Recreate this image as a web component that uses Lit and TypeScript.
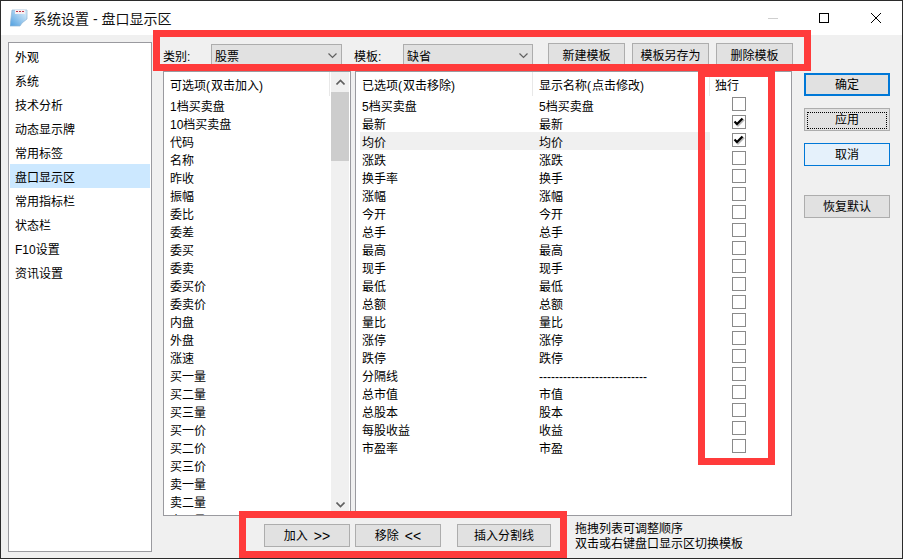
import { LitElement, css, html } from "lit";
import { customElement } from "lit/decorators.js";

const NAV = ["外观", "系统", "技术分析", "动态显示牌", "常用标签", "盘口显示区", "常用指标栏", "状态栏", "F10设置", "资讯设置"];

const AVAILABLE = [
  "1档买卖盘", "10档买卖盘", "代码", "名称", "昨收", "振幅", "委比", "委差", "委买", "委卖", "委买价", "委卖价",
  "内盘", "外盘", "涨速", "买一量", "买二量", "买三量", "买一价", "买二价", "买三价", "卖一量", "卖二量", "卖三量",
];

const SELECTED: [string, string, boolean][] = [
  ["5档买卖盘", "5档买卖盘", false],
  ["最新", "最新", true],
  ["均价", "均价", true],
  ["涨跌", "涨跌", false],
  ["换手率", "换手", false],
  ["涨幅", "涨幅", false],
  ["今开", "今开", false],
  ["总手", "总手", false],
  ["最高", "最高", false],
  ["现手", "现手", false],
  ["最低", "最低", false],
  ["总额", "总额", false],
  ["量比", "量比", false],
  ["涨停", "涨停", false],
  ["跌停", "跌停", false],
  ["分隔线", "---------------------------", false],
  ["总市值", "市值", false],
  ["总股本", "股本", false],
  ["每股收益", "收益", false],
  ["市盈率", "市盈", false],
];

const chevron = html`<svg class="chev" width="9" height="6" viewBox="0 0 9 6"><path d="M.5 .5 4.5 4.5 8.5 .5" fill="none" stroke="#606060" stroke-width="1.2"/></svg>`;

@customElement("app-root")
export class AppRoot extends LitElement {
  static styles = css`
    :host {
      display: block;
      position: relative;
      width: 903px;
      height: 559px;
      overflow: hidden;
      font: 12px/18px "Liberation Sans", "Noto Sans CJK SC", sans-serif;
      color: #000;
    }

    .window {
      box-sizing: border-box;
      width: 903px;
      height: 559px;
      display: flex;
      flex-direction: column;
      background: #f0f0f0;
      border: 1px solid #2b2b2b;
    }

    .titlebar {
      height: 34px;
      flex: none;
      display: flex;
      align-items: center;
      background: #fff;
      padding-left: 9px;
    }

    .title {
      font-size: 14px;
      margin-left: 5px;
      padding-top: 2px;
      color: #111;
    }

    .winbtns {
      margin-left: auto;
      display: flex;
      align-items: center;
      margin-right: 21px;
    }

    .winbtns svg {
      display: block;
      margin-left: 41px;
    }

    .winbtns svg:last-child {
      margin-left: 42px;
    }

    .body {
      flex: 1;
      display: flex;
      padding: 7px 0 6px 7px;
      min-height: 0;
    }

    .nav {
      box-sizing: border-box;
      width: 144px;
      flex: none;
      background: #fff;
      border: 1px solid #9a9a9f;
      padding: 1px;
    }

    .nav div {
      box-sizing: border-box;
      height: 24px;
      line-height: 24px;
      padding: 2px 0 0 5px;
    }

    .nav .on {
      background: #cce8ff;
    }

    .main {
      width: 629px;
      flex: none;
      margin-left: 11px;
      display: flex;
      flex-direction: column;
    }

    .toolbar {
      box-sizing: border-box;
      display: flex;
      align-items: flex-start;
      height: 29px;
      flex: none;
      padding-top: 1px;
    }

    .tlabel {
      width: 48px;
      flex: none;
      line-height: 24px;
      margin-top: 2px;
    }

    .tlabel.second {
      margin-left: 12px;
      width: 49px;
    }

    .combo {
      box-sizing: border-box;
      height: 23px;
      margin-top: 1px;
      background: #e1e1e1;
      border: 1px solid #adadad;
      display: flex;
      align-items: center;
      padding: 0 4px 0 3px;
      flex: none;
      justify-content: space-between;
    }

    .combo span {
      padding-top: 2px;
    }

    .btn {
      box-sizing: border-box;
      height: 23px;
      flex: none;
      background: #e1e1e1;
      border: 1px solid #adadad;
      display: flex;
      align-items: center;
      justify-content: center;
      padding-top: 1px;
    }

    .toolbar .btn {
      width: 77px;
      margin-left: 7px;
      padding-top: 2px;
    }

    .toolbar .btn.first {
      margin-left: 15px;
    }

    .lists {
      flex: 1;
      display: flex;
      min-height: 0;
    }

    .avail,
    .chosen {
      box-sizing: border-box;
      background: #fff;
      border: 1px solid #9a9a9f;
      height: 445px;
      overflow: hidden;
    }

    .avail {
      width: 188px;
      flex: none;
      display: flex;
    }

    .avail .col {
      flex: 1;
      min-width: 0;
    }

    .head {
      height: 24px;
      line-height: 28px;
      display: flex;
    }

    .avail .head,
    .avail .item {
      padding-left: 6px;
    }

    .item {
      box-sizing: border-box;
      height: 18px;
      padding-top: 2px;
      white-space: nowrap;
    }

    .avail .head {
      border-right: 1px solid #e8e8e8;
      margin-right: 1px;
    }

    .paren {
      letter-spacing: 1px;
    }

    .scroll {
      width: 18px;
      flex: none;
      margin-right: 1px;
      background: #f0f0f0;
      display: flex;
      flex-direction: column;
      align-items: center;
    }

    .arrow {
      height: 20px;
      flex: none;
      display: flex;
      align-items: center;
      justify-content: center;
    }

    .thumb {
      align-self: stretch;
      height: 69px;
      flex: none;
      background: #cdcdcd;
    }

    .spacer {
      flex: 1;
    }

    .chosen {
      width: 437px;
      margin-left: 4px;
      flex: none;
      padding-left: 4px;
    }

    .chosen .head > span {
      box-sizing: border-box;
      flex: none;
      white-space: nowrap;
    }

    .chosen .head .first {
      width: 172px;
      padding-left: 2px;
    }

    .chosen .head .mid {
      width: 178px;
      border-left: 1px solid #e8e8e8;
      border-right: 1px solid #e8e8e8;
      padding-left: 6px;
    }

    .chosen .head .last {
      padding-left: 5px;
    }

    .row {
      height: 18px;
      display: flex;
      align-items: flex-start;
    }

    .cells {
      box-sizing: border-box;
      width: 350px;
      height: 18px;
      flex: none;
      display: flex;
      padding-top: 2px;
    }

    .cells span:first-child {
      box-sizing: border-box;
      width: 179px;
      padding-left: 2px;
      flex: none;
    }

    .row.hot .cells {
      background: #f0f0f0;
    }

    .check {
      box-sizing: border-box;
      width: 14px;
      height: 14px;
      margin: 1px 0 0 22px;
      border: 1px solid #8a8a8a;
      background: #fff;
      flex: none;
      display: flex;
      align-items: center;
      justify-content: center;
    }

    .check svg {
      display: block;
    }

    .bottom {
      box-sizing: border-box;
      display: flex;
      height: 36px;
      flex: none;
      align-items: flex-start;
      padding: 8px 0 0 101px;
    }

    .bottom .btn {
      width: 86px;
    }

    .bottom .btn + .btn {
      margin-left: 5px;
    }

    .bottom .btn.wide {
      width: 94px;
      margin-left: 16px;
    }

    .arrows {
      font-size: 14px;
      margin-left: 6px;
    }

    .hint {
      margin-left: 24px;
      line-height: 15px;
      white-space: nowrap;
      margin-top: -2px;
    }

    .side {
      width: 86px;
      flex: none;
      margin-left: 12px;
      padding-top: 31px;
      display: flex;
      flex-direction: column;
    }

    .side .btn {
      margin-bottom: 12px;
    }

    .side .ok {
      border: 2px solid #0078d7;
    }

    .side .apply span {
      outline: 1px dotted #000;
      width: 78px;
      height: 15px;
      line-height: 15px;
      text-align: center;
    }

    .side .cancel {
      background: #e5f1fb;
      border-color: #0078d7;
    }

    .side .restore {
      margin-top: 17px;
    }

    .frame {
      position: absolute;
      box-sizing: border-box;
      border: 7px solid #ff3b3b;
      pointer-events: none;
    }

    .f1 { left: 153px; top: 30px; width: 658px; height: 41px; }
    .f2 { left: 698px; top: 70px; width: 77px; height: 395px; }
    .f3 { left: 239px; top: 511px; width: 328px; height: 47px; }
  `;

  render() {
    return html`
      <div class="window">
        <div class="titlebar">
          <svg width="18" height="18" viewBox="0 0 18 18">
            <defs>
              <linearGradient id="page" x1="0" y1="1" x2="1" y2="0">
                <stop offset="0" stop-color="#4f9fe0"/>
                <stop offset="1" stop-color="#e4f2fb"/>
              </linearGradient>
            </defs>
            <path d="M2 1h15v9l-5 4-2 3H0z" fill="url(#page)" stroke="#8fb4d4" stroke-width=".7"/>
            <rect x="5" y="1" width="10" height="4" fill="#f7eef0"/>
            <path d="M6 2.5h8" stroke="#b8374c" stroke-dasharray="2 1"/>
          </svg>
          <span class="title">系统设置 - 盘口显示区</span>
          <div class="winbtns">
            <svg width="10" height="10" viewBox="0 0 10 10"><path d="M0 5.5h10" stroke="#cfcfcf"/></svg>
            <svg width="10" height="10" viewBox="0 0 10 10"><rect x=".5" y=".5" width="9" height="9" fill="none" stroke="#000"/></svg>
            <svg width="10" height="10" viewBox="0 0 10 10"><path d="M0 0 10 10M10 0 0 10" stroke="#000" fill="none"/></svg>
          </div>
        </div>
        <div class="body">
          <div class="nav">
            ${NAV.map((n) => html`<div class=${n === "盘口显示区" ? "on" : ""}>${n}</div>`)}
          </div>
          <div class="main">
            <div class="toolbar">
              <span class="tlabel">类别:</span>
              <div class="combo" style="width:131px"><span>股票</span>${chevron}</div>
              <span class="tlabel second">模板:</span>
              <div class="combo" style="width:130px"><span>缺省</span>${chevron}</div>
              <div class="btn first">新建模板</div>
              <div class="btn">模板另存为</div>
              <div class="btn">删除模板</div>
            </div>
            <div class="lists">
              <div class="avail">
                <div class="col">
                  <div class="head"><span>可选项<span class="paren">(</span>双击加入<span class="paren">)</span></span></div>
                  ${AVAILABLE.map((a) => html`<div class="item">${a}</div>`)}
                </div>
                <div class="scroll">
                  <div class="arrow"><svg width="9" height="6" viewBox="0 0 9 6"><path d="M.5 5.5 4.5 1.5 8.5 5.5" fill="none" stroke="#606060" stroke-width="1.6"/></svg></div>
                  <div class="thumb"></div>
                  <div class="spacer"></div>
                  <div class="arrow"><svg width="9" height="6" viewBox="0 0 9 6"><path d="M.5 .5 4.5 4.5 8.5 .5" fill="none" stroke="#606060" stroke-width="1.6"/></svg></div>
                </div>
              </div>
              <div class="chosen">
                <div class="head">
                  <span class="first">已选项<span class="paren">(</span>双击移除<span class="paren">)</span></span>
                  <span class="mid">显示名称<span class="paren">(</span>点击修改<span class="paren">)</span></span>
                  <span class="last">独行</span>
                </div>
                ${SELECTED.map(
                  ([name, label, on], i) => html`
                    <div class="row ${i === 2 ? "hot" : ""}">
                      <div class="cells"><span>${name}</span><span>${label}</span></div>
                      <div class="check">
                        ${on
                          ? html`<svg width="12" height="12" viewBox="0 0 12 12">
                              <path d="M2.5 7 5 9.5 11 3.5" fill="none" stroke="#b5b5b5" stroke-width="2"/>
                              <path d="M1.5 5.5 4 8 9.5 2.5" fill="none" stroke="#000" stroke-width="2.2"/>
                            </svg>`
                          : ""}
                      </div>
                    </div>
                  `,
                )}
              </div>
            </div>
            <div class="bottom">
              <div class="btn">加入<span class="arrows">&gt;&gt;</span></div>
              <div class="btn">移除<span class="arrows">&lt;&lt;</span></div>
              <div class="btn wide">插入分割线</div>
              <div class="hint">拖拽列表可调整顺序<br />双击或右键盘口显示区切换模板</div>
            </div>
          </div>
          <div class="side">
            <div class="btn ok">确定</div>
            <div class="btn apply"><span>应用</span></div>
            <div class="btn cancel">取消</div>
            <div class="btn restore">恢复默认</div>
          </div>
        </div>
      </div>
      <div class="frame f1"></div>
      <div class="frame f2"></div>
      <div class="frame f3"></div>
    `;
  }
}
